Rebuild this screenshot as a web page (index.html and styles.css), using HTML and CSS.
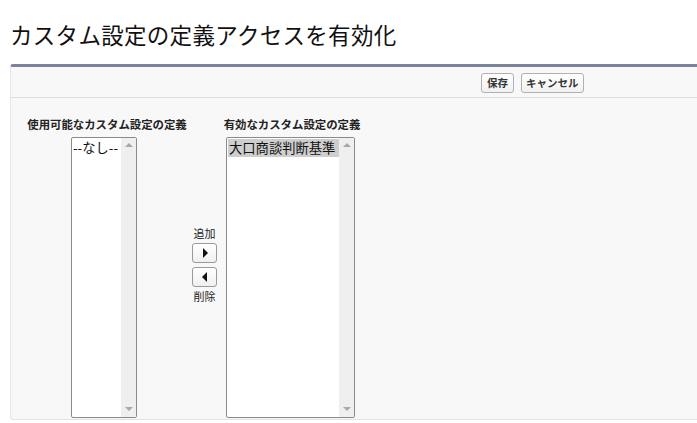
FILE: index.html
```html
<!DOCTYPE html>
<html lang="ja">
<head>
<meta charset="utf-8">
<link rel="stylesheet" href="styles.css">
</head>
<body>
<h1 class="title">カスタム設定の定義アクセスを有効化</h1>
<div class="panel">
  <div class="panel-head">
    <button class="btn">保存</button>
    <button class="btn">キャンセル</button>
  </div>
  <div class="panel-body">
    <div class="col col-left">
      <div class="label">使用可能なカスタム設定の定義</div>
      <div class="listbox lb-left">
        <div class="options"><div class="opt">--なし--</div></div>
        <div class="sbar"><span class="up"></span><span class="down"></span></div>
      </div>
    </div>
    <div class="col col-mid">
      <div class="mid-label">追加</div>
      <button class="arrow"><span class="tri-right"></span></button>
      <button class="arrow"><span class="tri-left"></span></button>
      <div class="mid-label">削除</div>
    </div>
    <div class="col col-right">
      <div class="label">有効なカスタム設定の定義</div>
      <div class="listbox lb-right">
        <div class="options"><div class="opt sel">大口商談判断基準</div></div>
        <div class="sbar"><span class="up"></span><span class="down"></span></div>
      </div>
    </div>
  </div>
</div>
</body>
</html>
```
FILE: styles.css
```css
html, body {
  margin: 0;
  padding: 0;
  background: #ffffff;
  overflow: hidden;
}
body {
  font-family: "Noto Sans CJK JP", "Noto Sans", sans-serif;
  color: #000;
  width: 697px;
  height: 423px;
}
.title {
  margin: 0;
  padding: 18px 0 0 10px;
  height: 47px;
  box-sizing: border-box;
  font-size: 22.5px;
  font-weight: normal;
  line-height: 32px;
  color: #111;
  letter-spacing: 0.3px;
}
.panel {
  margin: 17px 0 0 10px;
  width: 687px;
  height: 356px;
  box-sizing: border-box;
  background: #f8f8f8;
  border-top: 3px solid #7a849a;
  border-left: 1px solid #e6e6e6;
  border-bottom: 1px solid #e3e3e3;
  border-radius: 3px 0 0 3px;
}
.panel-head {
  height: 31px;
  box-sizing: border-box;
  border-bottom: 1px solid #dedede;
  display: flex;
  align-items: center;
  gap: 7px;
  padding-left: 470px;
  padding-top: 1px;
}
.btn {
  font-family: "Noto Sans CJK JP", sans-serif;
  font-size: 10.5px;
  font-weight: bold;
  color: #333;
  height: 20px;
  padding: 0 5px;
  line-height: 17px;
  border: 1px solid #b0b0b0;
  border-radius: 3px;
  background: linear-gradient(#ffffff, #f1f1f1);
}
.btn + .btn { padding: 0 4px; }
.panel-body {
  display: flex;
  padding: 19px 0 0 16px;
}
.col {
  display: flex;
  flex-direction: column;
  align-items: center;
}
.col-left { width: 160px; }
.col-mid {
  width: 37px;
  box-sizing: border-box;
  padding-top: 110px;
  padding-right: 2px;
}
.col-right { width: 136px; }
.label {
  font-size: 11.4px;
  font-weight: bold;
  line-height: 15px;
  color: #222;
  white-space: nowrap;
  height: 20px;
}
.listbox {
  height: 281px;
  box-sizing: border-box;
  border: 1px solid #8a8a8a;
  border-radius: 2px;
  background: #fff;
  display: flex;
}
.lb-left { width: 66px; margin-left: -6px; }
.lb-right { width: 129px; margin-left: -3px; }
.options {
  flex: 1;
  padding: 1px 0 0 1px;
}
.opt {
  font-size: 13.3px;
  line-height: 18px;
  color: #111;
  white-space: nowrap;
}
.opt.sel {
  background: #cecece;
  padding-left: 1px;
}
.sbar {
  width: 15px;
  background: #efefef;
  position: relative;
}
.up, .down {
  position: absolute;
  left: 4px;
  width: 0;
  height: 0;
  border-left: 4px solid transparent;
  border-right: 4px solid transparent;
}
.up {
  top: 5px;
  border-bottom: 4px solid #a8a8a8;
}
.down {
  bottom: 6px;
  border-top: 4px solid #a8a8a8;
}
.mid-label {
  font-size: 11px;
  line-height: 13px;
  color: #222;
}
.arrow {
  width: 25px;
  height: 20px;
  margin-top: 3px;
  padding: 0;
  border: 1px solid #9a9a9a;
  border-radius: 3px;
  background: linear-gradient(#ffffff, #f0f0f0);
  display: flex;
  align-items: center;
  justify-content: center;
}
.arrow + .arrow { margin-top: 4px; }
.arrow + .mid-label { margin-top: 3px; }
.tri-right {
  width: 0; height: 0;
  border-top: 5px solid transparent;
  border-bottom: 5px solid transparent;
  border-left: 5px solid #111;
  margin-left: 1px;
}
.tri-left {
  width: 0; height: 0;
  border-top: 5px solid transparent;
  border-bottom: 5px solid transparent;
  border-right: 5px solid #111;
  margin-right: 1px;
}
```
